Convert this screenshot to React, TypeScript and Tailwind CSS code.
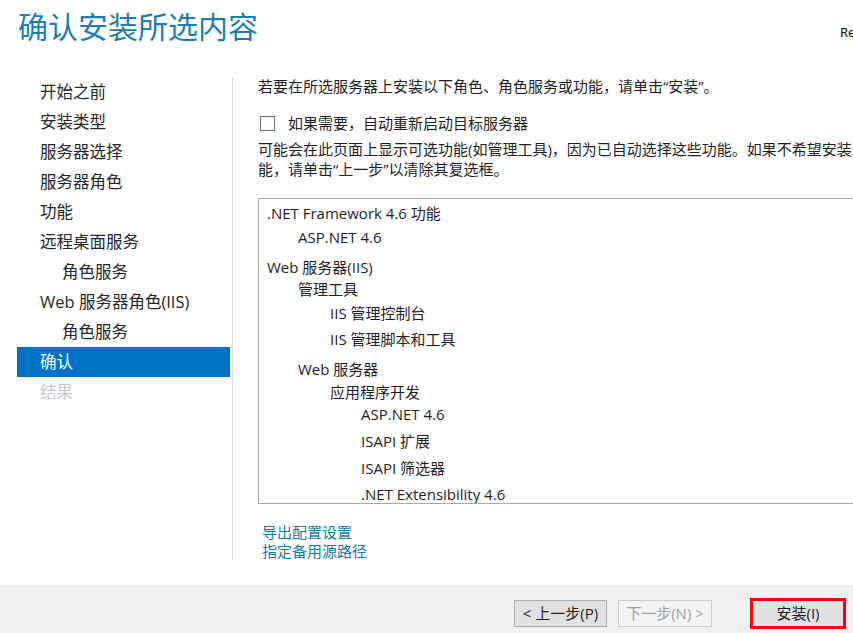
const navItems = [
  { label: "开始之前", indent: false },
  { label: "安装类型", indent: false },
  { label: "服务器选择", indent: false },
  { label: "服务器角色", indent: false },
  { label: "功能", indent: false },
  { label: "远程桌面服务", indent: false },
  { label: "角色服务", indent: true },
  { label: "Web 服务器角色(IIS)", indent: false },
  { label: "角色服务", indent: true },
  { label: "确认", indent: false, active: true },
  { label: "结果", indent: false, disabled: true },
];

// level -> left padding, mt -> gap above the row
const features = [
  { label: ".NET Framework 4.6 功能", pl: "pl-[8px]", mt: "mt-[3px]" },
  { label: "ASP.NET 4.6", pl: "pl-[39px]", mt: "mt-[2px]" },
  { label: "Web 服务器(IIS)", pl: "pl-[8px]", mt: "mt-[8px]" },
  { label: "管理工具", pl: "pl-[39px]", mt: "mt-0" },
  { label: "IIS 管理控制台", pl: "pl-[71px]", mt: "mt-[2px]" },
  { label: "IIS 管理脚本和工具", pl: "pl-[71px]", mt: "mt-[4px]" },
  { label: "Web 服务器", pl: "pl-[39px]", mt: "mt-[8px]" },
  { label: "应用程序开发", pl: "pl-[71px]", mt: "mt-[1px]" },
  { label: "ASP.NET 4.6", pl: "pl-[102px]", mt: "mt-0" },
  { label: "ISAPI 扩展", pl: "pl-[102px]", mt: "mt-[5px]" },
  { label: "ISAPI 筛选器", pl: "pl-[102px]", mt: "mt-[5px]" },
  { label: ".NET Extensibility 4.6", pl: "pl-[102px]", mt: "mt-[4px]" },
];

const App: React.FC = () => {
  return (
    <div className="w-[853px] h-[633px] overflow-hidden bg-white flex flex-col text-[#1e1e1e] font-['Open_Sans','Noto_Sans_CJK_SC',sans-serif]">
      {/* Header */}
      <div className="h-[77px] flex items-start shrink-0">
        <h1 className="pl-[18px] pt-[7px] text-[30px] leading-[40px] font-normal text-[#1c7eaf] whitespace-nowrap">
          确认安装所选内容
        </h1>
        <div className="ml-auto w-[13px] overflow-hidden whitespace-nowrap pt-[22px] text-[13px] leading-[20px] text-black">
          Re
        </div>
      </div>

      {/* Body */}
      <div className="h-[483px] flex shrink-0">
        {/* Left nav */}
        <div className="w-[232px] pl-[17px] pr-[2px] shrink-0">
          {navItems.map((item, i) => (
            <div
              key={i}
              className={`h-[30px] flex items-center text-[16.5px] whitespace-nowrap ${
                item.indent ? "pl-[45px]" : "pl-[23px]"
              } ${
                item.active
                  ? "bg-[#0072c6] text-white"
                  : item.disabled
                  ? "text-[#c8c8c8]"
                  : "text-[#262626]"
              }`}
            >
              {item.label}
            </div>
          ))}
        </div>

        <div className="w-px bg-[#d9d9d9] shrink-0" />

        {/* Right content */}
        <div className="flex-1 pl-[25px] text-[15px] min-w-0 overflow-hidden">
          <p className="leading-[20px] -mt-[1px] whitespace-nowrap">
            若要在所选服务器上安装以下角色、角色服务或功能，请单击“安装”。
          </p>

          <label className="mt-[16px] h-[22px] flex items-center gap-[13px] pl-[2px]">
            <span className="w-[15px] h-[15px] border border-[#707070] bg-white shrink-0" />
            <span className="leading-[22px] whitespace-nowrap">如果需要，自动重新启动目标服务器</span>
          </label>

          <div className="mt-[5px] leading-[20px] whitespace-nowrap">
            <div>可能会在此页面上显示可选功能(如管理工具)，因为已自动选择这些功能。如果不希望安装这些可选功</div>
            <div>能，请单击“上一步”以清除其复选框。</div>
          </div>

          <div className="mt-[19px] w-[640px] h-[306px] border border-[#a9a9a9] overflow-hidden">
            {features.map((f, i) => (
              <div key={i} className={`h-[22px] leading-[22px] whitespace-nowrap ${f.pl} ${f.mt}`}>
                {f.label}
              </div>
            ))}
          </div>

          <div className="mt-[19px] pl-[4px] text-[#1479ad] leading-[19px]">
            <div className="cursor-pointer">导出配置设置</div>
            <div className="cursor-pointer">指定备用源路径</div>
          </div>
        </div>
      </div>

      <div className="h-[26px] shrink-0" />

      {/* Footer */}
      <div className="h-[47px] shrink-0 bg-[#f0f0f0] border-t border-[#e3e3e3] flex items-start pt-[11px] text-[15px]">
        <button className="ml-[514px] mt-[2px] w-[93px] h-[27px] border border-[#adadad] bg-[#e1e1e1] text-[#1e1e1e] flex items-center justify-center whitespace-nowrap">
          &lt; 上一步(P)
        </button>
        <button className="ml-[11px] mt-[2px] w-[94px] h-[27px] border border-[#cccccc] bg-[#f4f4f4] text-[#a0a0a0] flex items-center justify-center whitespace-nowrap">
          下一步(N) &gt;
        </button>
        <button className="ml-[38px] w-[96px] h-[31px] border-[3px] border-[#ff0000] bg-[#e1e1e1] text-[#1e1e1e] flex items-center justify-center whitespace-nowrap">
          安装(I)
        </button>
      </div>
    </div>
  );
};

export default App;
